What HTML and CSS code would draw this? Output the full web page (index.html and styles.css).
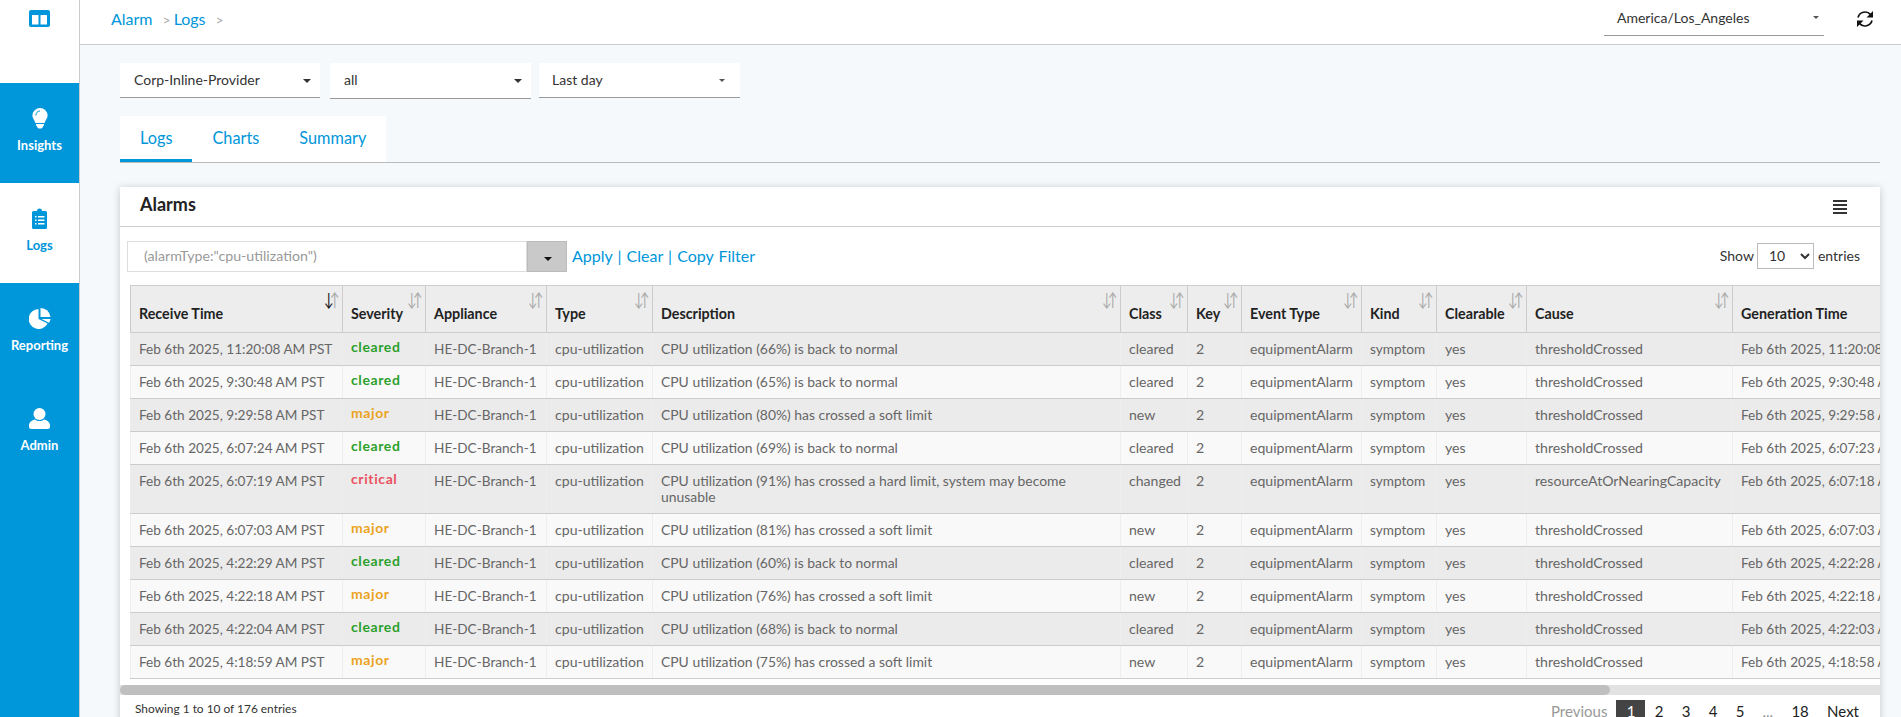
FILE: index.html
```html
<!DOCTYPE html>
<html>
<head>
    <title>Alarm Logs</title>
    <link rel="stylesheet" href="styles.css">
</head>
<body>
    <nav class="sidebar">
        <div class="side-logo">
            <svg width="21" height="17" viewBox="0 0 21 17">
                <rect width="21" height="17" rx="2" fill="#0096da"/>
                <rect x="3" y="5" width="6.5" height="9.5" fill="#fff"/>
                <rect x="11.5" y="5" width="6.5" height="9.5" fill="#fff"/>
            </svg>
        </div>
        <a class="side-item">
            <svg class="side-icon" width="16" height="21" viewBox="0 0 16 21">
                <path d="M8 0a7.6 7.6 0 0 1 7.6 7.6c0 3-2.3 4.6-3 7.4H3.400c-.7-2.800-3-4.400-3-7.400A7.600 7.600 0 0 1 8 0z" fill="#fff"/>
                <path d="M4 7.500A4 4 0 0 1 8 3" fill="none" stroke="#0096da" stroke-width="1"/>
                <path d="M4 16h8v1.500l-1 .8v.7l-1.500 1.500h-3L5 19v-.7l-1-.8z" fill="#fff"/>
            </svg>
            <span>Insights</span>
        </a>
        <a class="side-item current">
            <svg class="side-icon" width="15" height="21" viewBox="0 0 15 21">
                <path d="M1.500 3H5a2.500 2.500 0 0 1 5 0h3.500A1.500 1.500 0 0 1 15 4.500v15a1.500 1.500 0 0 1-1.500 1.500h-12A1.500 1.500 0 0 1 0 19.500v-15A1.500 1.500 0 0 1 1.500 3z" fill="#0096da"/>
                <path d="M3 8h1.500v1.500H3zM6 8h6.500v1.500H6zM3 11.500h1.500V13H3zM6 11.500h6.500V13H6zM3 15h1.500v1.500H3zM6 15h6.500v1.500H6z" fill="#fff"/>
            </svg>
            <span>Logs</span>
        </a>
        <a class="side-item">
            <svg class="side-icon" width="22" height="21" viewBox="0 0 22 21">
                <path d="M9.500 1A10 10 0 1 0 18.600 15.500L9.500 11z" fill="#fff"/>
                <path d="M11.500 0A10 10 0 0 1 21.500 9H11.500z" fill="#fff"/>
                <path d="M12.500 11H21.500A10 10 0 0 1 20 14.800z" fill="#fff"/>
            </svg>
            <span>Reporting</span>
        </a>
        <a class="side-item">
            <svg class="side-icon" width="21" height="21" viewBox="0 0 21 21">
                <ellipse cx="10.500" cy="6" rx="6" ry="6" fill="#fff"/>
                <path d="M6 11.500c2.500 2 6.500 2 9 0 3 .6 6 2.500 6 6v1a2.500 2.500 0 0 1-2.500 2.500h-16A2.500 2.500 0 0 1 0 18.500v-1c0-3.500 3-5.400 6-6z" fill="#fff"/>
            </svg>
            <span>Admin</span>
        </a>
    </nav>

    <div class="main">
        <header class="topbar">
            <div class="crumbs">
                <a>Alarm</a><i>&gt;</i><a>Logs</a><i>&gt;</i>
            </div>
            <div class="tz-select">America/Los_Angeles<b class="caret small"></b></div>
            <svg class="refresh" width="18" height="18" viewBox="0 0 18 18">
                <path d="M2 7.500A7.300 7.300 0 0 1 14.600 4.600M16 10.500A7.300 7.300 0 0 1 3.400 13.400" fill="none" stroke="#111" stroke-width="1.700"/>
                <path d="M17 1v6.500h-6.500zM1 17v-6.500h6.500z" fill="#111"/>
            </svg>
        </header>

        <div class="content">
            <div class="filters">
                <div class="filter-select first">Corp-Inline-Provider<b class="caret"></b></div>
                <div class="filter-select second">all<b class="caret"></b></div>
                <div class="filter-select third">Last day<b class="caret small"></b></div>
            </div>

            <div class="tabs">
                <a class="tab active">Logs</a>
                <a class="tab">Charts</a>
                <a class="tab">Summary</a>
            </div>

            <section class="card">
                <div class="card-head">
                    <h3>Alarms</h3>
                    <div class="menu-icon"><span></span><span></span><span></span><span></span></div>
                </div>

                <div class="tools">
                    <div class="query">(alarmType:"cpu-utilization")</div>
                    <div class="query-btn"><b class="caret dark"></b></div>
                    <div class="query-links"><a>Apply</a> | <a>Clear</a> | <a>Copy Filter</a></div>
                    <div class="show-entries">
                        Show
                        <select><option>10</option><option>25</option><option>50</option></select>
                        entries
                    </div>
                </div>

                <div class="table-wrap">
                    <table class="alarms">
                        <colgroup>
                            <col class="c-receive"><col class="c-severity"><col class="c-appliance"><col class="c-type">
                            <col class="c-desc"><col class="c-class"><col class="c-key"><col class="c-event">
                            <col class="c-kind"><col class="c-clearable"><col class="c-cause"><col class="c-gen">
                        </colgroup>
                        <thead>
                            <tr>
                                <th class="sorted">Receive Time</th>
                                <th>Severity</th>
                                <th>Appliance</th>
                                <th>Type</th>
                                <th>Description</th>
                                <th>Class</th>
                                <th>Key</th>
                                <th>Event Type</th>
                                <th>Kind</th>
                                <th>Clearable</th>
                                <th>Cause</th>
                                <th>Generation Time</th>
                            </tr>
                        </thead>
                        <tbody>
                            <tr><td>Feb 6th 2025, 11:20:08 AM PST</td><td><span class="sev cleared">cleared</span></td><td>HE-DC-Branch-1</td><td>cpu-utilization</td><td>CPU utilization (66%) is back to normal</td><td>cleared</td><td>2</td><td>equipmentAlarm</td><td>symptom</td><td>yes</td><td>thresholdCrossed</td><td>Feb 6th 2025, 11:20:08 AM PST</td></tr>
                            <tr><td>Feb 6th 2025, 9:30:48 AM PST</td><td><span class="sev cleared">cleared</span></td><td>HE-DC-Branch-1</td><td>cpu-utilization</td><td>CPU utilization (65%) is back to normal</td><td>cleared</td><td>2</td><td>equipmentAlarm</td><td>symptom</td><td>yes</td><td>thresholdCrossed</td><td>Feb 6th 2025, 9:30:48 AM PST</td></tr>
                            <tr><td>Feb 6th 2025, 9:29:58 AM PST</td><td><span class="sev major">major</span></td><td>HE-DC-Branch-1</td><td>cpu-utilization</td><td>CPU utilization (80%) has crossed a soft limit</td><td>new</td><td>2</td><td>equipmentAlarm</td><td>symptom</td><td>yes</td><td>thresholdCrossed</td><td>Feb 6th 2025, 9:29:58 AM PST</td></tr>
                            <tr><td>Feb 6th 2025, 6:07:24 AM PST</td><td><span class="sev cleared">cleared</span></td><td>HE-DC-Branch-1</td><td>cpu-utilization</td><td>CPU utilization (69%) is back to normal</td><td>cleared</td><td>2</td><td>equipmentAlarm</td><td>symptom</td><td>yes</td><td>thresholdCrossed</td><td>Feb 6th 2025, 6:07:23 AM PST</td></tr>
                            <tr><td>Feb 6th 2025, 6:07:19 AM PST</td><td><span class="sev critical">critical</span></td><td>HE-DC-Branch-1</td><td>cpu-utilization</td><td>CPU utilization (91%) has crossed a hard limit, system may become unusable</td><td>changed</td><td>2</td><td>equipmentAlarm</td><td>symptom</td><td>yes</td><td>resourceAtOrNearingCapacity</td><td>Feb 6th 2025, 6:07:18 AM PST</td></tr>
                            <tr><td>Feb 6th 2025, 6:07:03 AM PST</td><td><span class="sev major">major</span></td><td>HE-DC-Branch-1</td><td>cpu-utilization</td><td>CPU utilization (81%) has crossed a soft limit</td><td>new</td><td>2</td><td>equipmentAlarm</td><td>symptom</td><td>yes</td><td>thresholdCrossed</td><td>Feb 6th 2025, 6:07:03 AM PST</td></tr>
                            <tr><td>Feb 6th 2025, 4:22:29 AM PST</td><td><span class="sev cleared">cleared</span></td><td>HE-DC-Branch-1</td><td>cpu-utilization</td><td>CPU utilization (60%) is back to normal</td><td>cleared</td><td>2</td><td>equipmentAlarm</td><td>symptom</td><td>yes</td><td>thresholdCrossed</td><td>Feb 6th 2025, 4:22:28 AM PST</td></tr>
                            <tr><td>Feb 6th 2025, 4:22:18 AM PST</td><td><span class="sev major">major</span></td><td>HE-DC-Branch-1</td><td>cpu-utilization</td><td>CPU utilization (76%) has crossed a soft limit</td><td>new</td><td>2</td><td>equipmentAlarm</td><td>symptom</td><td>yes</td><td>thresholdCrossed</td><td>Feb 6th 2025, 4:22:18 AM PST</td></tr>
                            <tr><td>Feb 6th 2025, 4:22:04 AM PST</td><td><span class="sev cleared">cleared</span></td><td>HE-DC-Branch-1</td><td>cpu-utilization</td><td>CPU utilization (68%) is back to normal</td><td>cleared</td><td>2</td><td>equipmentAlarm</td><td>symptom</td><td>yes</td><td>thresholdCrossed</td><td>Feb 6th 2025, 4:22:03 AM PST</td></tr>
                            <tr><td>Feb 6th 2025, 4:18:59 AM PST</td><td><span class="sev major">major</span></td><td>HE-DC-Branch-1</td><td>cpu-utilization</td><td>CPU utilization (75%) has crossed a soft limit</td><td>new</td><td>2</td><td>equipmentAlarm</td><td>symptom</td><td>yes</td><td>thresholdCrossed</td><td>Feb 6th 2025, 4:18:58 AM PST</td></tr>
                        </tbody>
                    </table>
                </div>

                <div class="scroll-track"><div class="scroll-thumb"></div></div>

                <div class="table-foot">
                    <div class="showing">Showing 1 to 10 of 176 entries</div>
                    <div class="pager">
                        <a class="disabled">Previous</a>
                        <a class="page on">1</a>
                        <a class="page">2</a>
                        <a class="page">3</a>
                        <a class="page">4</a>
                        <a class="page">5</a>
                        <span class="gap">...</span>
                        <a class="page wide">18</a>
                        <a>Next</a>
                    </div>
                </div>
            </section>
        </div>
    </div>
</body>
</html>
```

FILE: styles.css
```css
* {
    box-sizing: border-box;
}

html, body {
    height: 100%;
}

body {
    margin: 0;
    display: flex;
    overflow: hidden;
    font-family: Lato, "Open Sans", sans-serif;
    font-size: 14px;
    color: #333;
    background: #f5f9fc;
}

/* Sidebar */
.sidebar {
    width: 80px;
    flex: none;
    height: 100%;
    background: #0096da;
    border-right: 1px solid #ccc;
}

.side-logo {
    height: 83px;
    padding-top: 10px;
    background: #fff;
    text-align: center;
}

.side-item {
    display: flex;
    flex-direction: column;
    align-items: center;
    height: 100px;
    padding-top: 25px;
    color: #fff;
    font-size: 13px;
    font-weight: 700;
    line-height: 16px;
}

.side-item.current {
    background: #fff;
    color: #0096da;
}

.side-icon {
    margin-bottom: 8px;
}

/* Top bar */
.main {
    flex: 1;
    min-width: 0;
    height: 100%;
}

.topbar {
    display: flex;
    align-items: flex-start;
    height: 45px;
    padding-left: 31px;
    background: #fff;
    border-bottom: 1px solid #ccc;
}

.crumbs {
    flex: 1;
    padding-top: 9px;
    font-size: 16px;
    line-height: 20px;
    color: #0096da;
}

.crumbs i {
    margin: 0 3px 0 10px;
    font-style: normal;
    font-size: 14px;
    color: #aaa;
}

.tz-select {
    position: relative;
    width: 220px;
    height: 36px;
    padding: 8px 0 0 13px;
    line-height: 20px;
    font-size: 14px;
    border-bottom: 1px solid #999;
}

.refresh {
    margin: 10px 27px 0 32px;
}

.caret {
    position: absolute;
    right: 9px;
    top: 16px;
    border-top: 4px solid #333;
    border-left: 4px solid transparent;
    border-right: 4px solid transparent;
}

.caret.small {
    top: 16px;
    right: 5px;
    border-top-width: 3px;
    border-left-width: 3px;
    border-right-width: 3px;
    border-top-color: #555;
}

/* Filters and tabs */
.content {
    padding: 18px 21px 0 40px;
}

.filters {
    display: flex;
    gap: 10px;
}

.filter-select {
    position: relative;
    width: 200px;
    height: 35px;
    padding: 7px 0 0 14px;
    background: #fff;
    border-bottom: 1px solid #999;
    line-height: 20px;
    font-size: 14px;
}

.filter-select.second {
    width: 201px;
    height: 36px;
}

.filter-select.third {
    margin-left: -2px;
    width: 201px;
    padding-left: 13px;
}

.filter-select.third .caret {
    right: 15px;
}

.tabs {
    display: flex;
    width: 100%;
    margin-top: 17px;
    border-bottom: 1px solid #bbb;
}

.tab {
    height: 46px;
    padding: 12px 20px 0;
    line-height: 20px;
    font-size: 16.300px;
    background: #fff;
    color: #0096da;
}

.tab.active {
    border-bottom: 3px solid #0096da;
}

/* Card */
.card {
    margin-top: 24px;
    background: #fff;
    box-shadow: 0 1px 8px rgba(0, 0, 0, 0.2);
}

.card-head {
    display: flex;
    align-items: center;
    justify-content: space-between;
    height: 40px;
    padding: 0 33px 0 20px;
    border-bottom: 1px solid #ccc;
}

.card-head h3 {
    margin: 0 0 5px;
    font-size: 18px;
    font-weight: 700;
    color: #222;
}

.menu-icon {
    display: flex;
    flex-direction: column;
    gap: 2px;
    width: 14px;
}

.menu-icon span {
    height: 2px;
    background: #333;
}

.tools {
    display: flex;
    align-items: center;
    height: 31px;
    margin: 14px 0 13px;
    padding: 0 20px 0 7px;
}

.query {
    width: 400px;
    height: 31px;
    padding: 5px 0 0 16px;
    border: 1px solid #ddd;
    line-height: 18px;
    font-size: 14.200px;
    color: #999;
}

.query-btn {
    position: relative;
    width: 40px;
    height: 31px;
    background: #c9c9c9;
    border: 1px solid #bbb;
}

.caret.dark {
    top: 15px;
    right: 14px;
    border-top-color: #111;
}

.query-links {
    flex: 1;
    margin: 0 0 2px 5px;
    font-size: 16px;
    word-spacing: 1px;
    color: #0096da;
}

.show-entries {
    display: flex;
    align-items: center;
    gap: 3px;
    margin-bottom: 2px;
    font-size: 14px;
}

.show-entries select {
    width: 57px;
    height: 26px;
    padding-left: 7px;
    margin-right: 1px;
    font-family: inherit;
    font-size: 14px;
    color: #333;
    background: #fff;
    border: 1px solid #bbb;
    border-radius: 0;
}

/* Table */
.table-wrap {
    overflow: hidden;
    padding: 0 10px 6px;
}

.alarms {
    table-layout: fixed;
    width: 2059px;
    border-collapse: collapse;
    font-size: 14.100px;
    line-height: 16px;
    color: #666;
}

.c-receive { width: 212px; }
.c-severity { width: 83px; }
.c-appliance { width: 121px; }
.c-type { width: 106px; }
.c-desc { width: 468px; }
.c-class { width: 67px; }
.c-key { width: 54px; }
.c-event { width: 120px; }
.c-kind { width: 75px; }
.c-clearable { width: 90px; }
.c-cause { width: 206px; }
.c-gen { width: 457px; }

.alarms th {
    position: relative;
    height: 47px;
    padding: 0 8px 10px;
    vertical-align: bottom;
    text-align: left;
    font-size: 14.300px;
    font-weight: 700;
    color: #222;
    background: #ededed;
    border: 1px solid #ccc;
}

/* sort arrows */
.alarms th::before,
.alarms th::after {
    position: absolute;
    top: 4px;
    font-size: 18px;
    font-weight: 400;
    line-height: 18px;
    color: #aaa;
    transform: scaleX(0.7);
}

.alarms th::before {
    content: "\2193";
    right: 6px;
}

.alarms th::after {
    content: "\2191";
    right: 0;
}

.alarms th.sorted::before {
    color: #111;
}

.alarms td {
    padding: 8px 8px;
    vertical-align: top;
    border: 1px solid #eee;
    border-top: 1px solid #ccc;
    border-bottom: 1px solid #ccc;
}

/* dates and a few names run narrower than the rest */
.alarms td:nth-child(1),
.alarms td:nth-child(3),
.alarms td:nth-child(9),
.alarms td:nth-child(12) {
    font-size: 13.600px;
}

.alarms td:nth-child(5) {
    font-size: 13.900px;
}

.alarms tbody tr:nth-child(odd) td {
    background: #ebebeb;
}

.alarms tbody tr:nth-child(even) td {
    background: #f9f9f9;
}

.sev {
    position: relative;
    top: -2px;
    font-size: 14px;
    font-weight: 700;
    letter-spacing: 0.6px;
}

.cleared { color: #2ca02c; }
.major { color: #eba31f; }
.critical { color: #ea5160; }

.scroll-track {
    height: 10px;
    background: #e2e2e2;
}

.scroll-thumb {
    width: 1490px;
    height: 100%;
    background: #bfbfbf;
    border-radius: 5px;
}

/* Footer */
.table-foot {
    display: flex;
    justify-content: space-between;
    padding: 5px 12px 10px 15px;
}

.showing {
    font-size: 11.900px;
    line-height: 18px;
    color: #333;
}

.pager {
    display: flex;
    font-size: 15px;
    line-height: 20px;
    color: #222;
}

.pager a,
.pager .gap {
    padding: 1px 9px 10px;
}

.pager .disabled {
    color: #999;
}

.pager .page {
    width: 27px;
    padding-left: 0;
    padding-right: 0;
    text-align: center;
}

.pager .page.on {
    width: 29px;
    background: #444;
    color: #fff;
}

.pager .page.wide {
    width: 36px;
}

.pager .gap {
    color: #999;
}
```
